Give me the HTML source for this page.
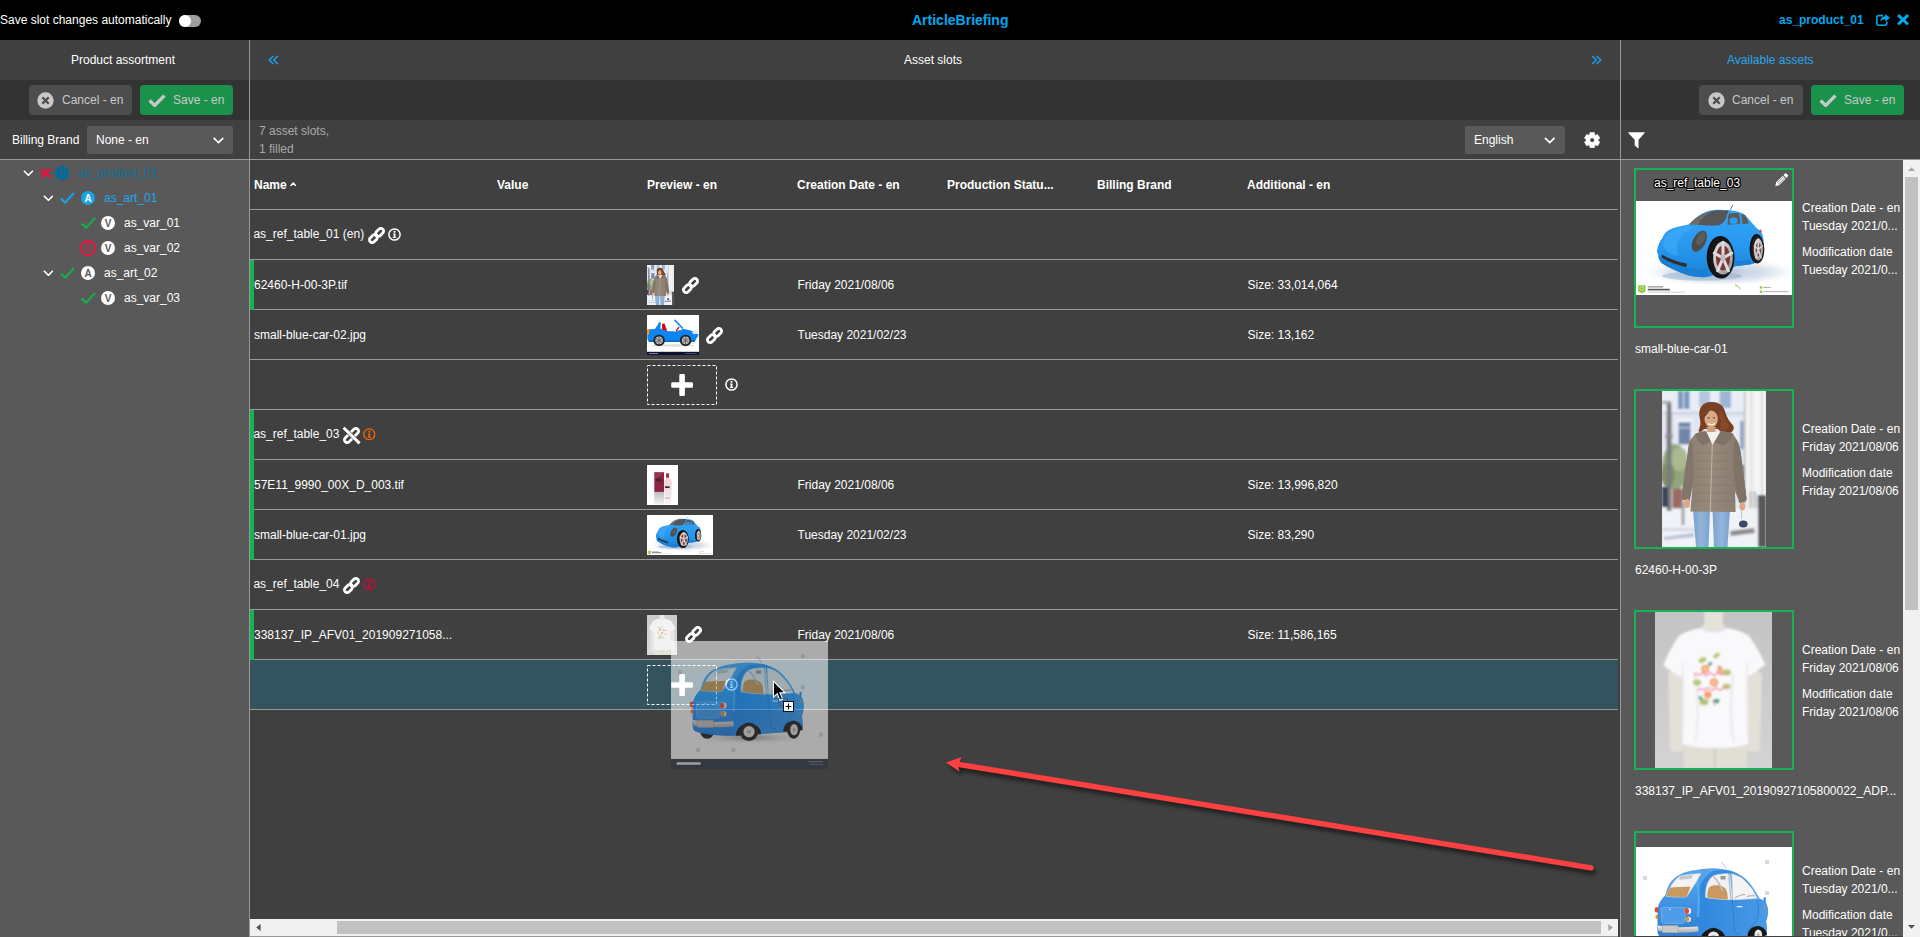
<!DOCTYPE html>
<html>
<head>
<meta charset="utf-8">
<title>ArticleBriefing</title>
<style>
*{box-sizing:border-box;margin:0;padding:0}
html,body{width:1920px;height:937px;overflow:hidden;background:#404040}
body{font-family:"Liberation Sans",sans-serif;font-size:12px;color:#fff;position:relative;line-height:14px}
.a{position:absolute}
.t{position:absolute;white-space:nowrap;line-height:14px;height:14px}
.b{font-weight:bold}
.hl{position:absolute;height:1px;background:#999}
.vl{position:absolute;width:1px;background:#999}
.btn{position:absolute;height:30px;border-radius:4px;top:85px}
.cancel{background:#4d4d4d}
.save{background:#1a924c}
.btn .t{top:8px;color:#c8c8c8}
.gbar{position:absolute;left:250px;width:4px;height:50px;background:#17b353}
.card{position:absolute;left:1634px;width:160px;height:160px;border:2px solid #17b353}
.meta{position:absolute;left:1802px;white-space:nowrap;line-height:14px;height:14px}
</style>
</head>
<body>

<!-- ===== icon symbols ===== -->
<svg width="0" height="0" style="position:absolute">
<defs>
<symbol id="chev" viewBox="0 0 11 7"><polyline points="0.7,0.8 5.5,5.6 10.3,0.8" fill="none" stroke="currentColor" stroke-width="1.7"/></symbol>
<symbol id="check" viewBox="0 0 15 12"><polyline points="0.8,6.6 5.2,10.6 14,1" fill="none" stroke="currentColor" stroke-width="2.1"/></symbol>
<symbol id="xx" viewBox="0 0 11 10"><path d="M1,0.8 L10,9.2 M10,0.8 L1,9.2" fill="none" stroke="currentColor" stroke-width="2.7"/></symbol>
<symbol id="link" viewBox="0 0 17 17"><g transform="rotate(-45 8.5 8.5)" fill="none" stroke="currentColor" stroke-width="2.8"><rect x="-0.4" y="5.75" width="8.9" height="5.5" rx="2.75"/><rect x="8.5" y="5.75" width="8.9" height="5.5" rx="2.75"/><circle cx="8.5" cy="8.5" r="1.2" fill="currentColor" stroke-width="1.2"/></g></symbol>
<symbol id="info" viewBox="0 0 13 13"><circle cx="6.5" cy="6.5" r="5.6" fill="none" stroke="currentColor" stroke-width="1.5"/><circle cx="6.5" cy="3.85" r="1.05" fill="currentColor"/><path d="M5.1,5.5h2.35v3.5h0.75v1h-3.4v-1h0.85v-2.5h-0.55z" fill="currentColor"/></symbol>
<symbol id="info2" viewBox="0 0 13 13"><circle cx="6.5" cy="6.5" r="5.65" fill="none" stroke="currentColor" stroke-width="1.3"/><circle cx="6.5" cy="3.85" r="1" fill="currentColor"/><path d="M5.2,5.55h2.2v3.45h0.7v0.95h-3.2v-0.95h0.8v-2.5h-0.5z" fill="currentColor"/></symbol>
<symbol id="bcheck" viewBox="0 0 18 13"><polyline points="1.6,6.6 6.7,11.4 16.4,1.6" fill="none" stroke="currentColor" stroke-width="3.4"/></symbol>
<symbol id="xcirc" viewBox="0 0 17 17"><circle cx="8.5" cy="8.5" r="8.2" fill="currentColor"/><path d="M5.3,5.3 L11.7,11.7 M11.7,5.3 L5.3,11.7" stroke="#4d4d4d" stroke-width="2.3" fill="none"/></symbol>
<symbol id="cog" viewBox="0 0 16.3 16.3"><path fill="currentColor" stroke="currentColor" stroke-width="0.7" stroke-linejoin="round" fill-rule="evenodd" d="M10.64,2.80L10.25,0.59L6.05,0.59L5.66,2.80L4.77,3.32L2.65,2.55L0.55,6.18L2.27,7.64L2.27,8.66L0.55,10.12L2.65,13.75L4.77,12.98L5.66,13.50L6.05,15.71L10.25,15.71L10.64,13.50L11.53,12.98L13.65,13.75L15.75,10.12L14.03,8.66L14.03,7.64L15.75,6.18L13.65,2.55L11.53,3.32Z M8.15,5.8500000000000005a2.3,2.3 0 1 0 0.001,0z"/></symbol>
<symbol id="filter" viewBox="0 0 17 17"><path fill="currentColor" d="M0.5,0.3h16a0.5,0.5 0 0 1 0.4,0.85l-6.3,6.9v8.3a0.4,0.4 0 0 1 -0.7,0.3l-3.1,-2.7a0.6,0.6 0 0 1 -0.2,-0.45v-5.45l-6.5,-6.9a0.5,0.5 0 0 1 0.4,-0.85z"/></symbol>
<symbol id="pencil" viewBox="0 0 14 14"><path fill="currentColor" d="M0.3,13.7l0.9,-3.9 6.9,-6.9 3,3 -6.9,6.9z M8.9,2.1l1.6,-1.6a0.9,0.9 0 0 1 1.3,0l1.7,1.7a0.9,0.9 0 0 1 0,1.3l-1.6,1.6z"/><path d="M2.2,10.6l6.4,-6.4 M3.5,11.9l6.4,-6.4" stroke="#595959" stroke-width="0.7" fill="none"/></symbol>
<symbol id="share" viewBox="0 0 14 12"><path fill="none" stroke="currentColor" stroke-width="1.6" d="M7,1.6h-4.6a1.6,1.6 0 0 0 -1.6,1.6v6.4a1.6,1.6 0 0 0 1.6,1.6h6.8a1.6,1.6 0 0 0 1.6,-1.6v-2.2"/><path fill="currentColor" d="M9.2,0l4.8,3.7 -4.8,3.7v-2.2c-2.6,0 -4,0.9 -4.9,2.9 0,-3.4 1.6,-5.6 4.9,-5.9z"/></symbol>
<symbol id="imgA" viewBox="0 0 156 94" preserveAspectRatio="none">
<defs>
<linearGradient id="aBody" x1="0" y1="0" x2="0" y2="1"><stop offset="0" stop-color="#35a5f6"/><stop offset="0.55" stop-color="#2798ef"/><stop offset="1" stop-color="#1c82d8"/></linearGradient>
<radialGradient id="aShadow" cx="0.5" cy="0.5" r="0.5"><stop offset="0" stop-color="#9fb6d0" stop-opacity="0.85"/><stop offset="0.6" stop-color="#c4d3e4" stop-opacity="0.6"/><stop offset="1" stop-color="#fff" stop-opacity="0"/></radialGradient>
<linearGradient id="aRim" x1="0" y1="0" x2="1" y2="1"><stop offset="0" stop-color="#e8e8e8"/><stop offset="1" stop-color="#8d8d8d"/></linearGradient>
</defs>
<rect width="156" height="94" fill="#fff"/>
<ellipse cx="84" cy="71" rx="82" ry="15" fill="url(#aShadow)"/>
<ellipse cx="66" cy="75" rx="40" ry="4.5" fill="#8aa3c0" opacity="0.45"/>
<!-- body -->
<path d="M20.8,50.4C22,44 24,40 26.1,37.6C28,33 30,30.5 33.1,29C38,26.5 44,25 49.1,24.2L53.4,23.2C57,19 62,14.5 67.2,12C72,9.8 77,8.9 81.1,8.8C86,8.6 90,8.8 93.9,9.3C98,9.8 101.5,10.4 104.6,11.4C108.5,13 111,15.5 113.1,18.4C116,22 118.5,24.5 120.6,26.9C123,28.5 124.8,30 125.9,32.2C127.3,35 127.8,40 127.6,46L118,62.8L99.3,65.3L92,70L71.500,76C64,76.500 57,75.500 51.200,73.900C41,70.500 32,66.500 25.600,62.100C23.500,60 22.600,57.500 22.400,54.600Z" fill="url(#aBody)"/>
<ellipse cx="84.3" cy="56" rx="13.6" ry="21" fill="#0d0d0d"/>
<!-- lower body darker -->
<path d="M22.4,54.600C32,60 42,64 51.200,66.500C58,68 64,68.500 70.800,68.200L71.500,76C64,76.500 57,75.500 51.200,73.900C41,70.500 32,66.500 25.600,62.100C23.500,60 22.600,57.500 22.400,54.600Z" fill="#1b7fd3"/>
<path d="M99.300,65.300L115.300,63.200L114.600,58.500L99.200,60.500Z" fill="#1b7fd3"/>
<!-- rear wheel -->
<ellipse cx="120.6" cy="47.6" rx="7" ry="14.6" fill="#0d0d0d"/>
<ellipse cx="121.7" cy="48.4" rx="6.6" ry="14" fill="#1c1c1c"/>
<ellipse cx="122.3" cy="48.4" rx="4.6" ry="11" fill="url(#aRim)"/>
<ellipse cx="122.3" cy="48.4" rx="2.6" ry="7" fill="#7a3b3b"/>
<path d="M122.3,48.4L122.3,38.0M122.3,48.4L118.3,45.2M122.3,48.4L119.8,56.8M122.3,48.4L124.8,56.8M122.3,48.4L126.3,45.2" stroke="#d6d6d6" stroke-width="1.6" stroke-linecap="round"/>
<!-- hood highlight -->
<path d="M28,38C32,31.500 40,27.500 50,25.500C54,25 57,25.500 58,27C52,29 46,33 43,38C40,44 40,50 43,55C38,55 32,52 29,48C27,45 27,41 28,38Z" fill="#43adf8" opacity="0.55"/>
<!-- windshield -->
<path d="M53.400,23.200C57.500,19 62.500,15 67.200,13C72,10.800 78,9.500 83.200,9.300L92.800,9.600C91.500,12.500 90.500,15.500 89.600,18.400C87.500,21 85.500,23 83.200,24.200C76,24.800 68,24.500 61.900,23.700Z" fill="#565656"/>
<path d="M53.400,23.200C57.500,19 62.500,15 67.200,13C70,11.800 73,10.800 76,10.200C70,14 65,18.500 61.900,23.700Z" fill="#6c6c6c"/>
<!-- side windows -->
<path d="M92.800,12.500C96,12 99.500,11.800 103,12L104.600,22.600C100.500,23.300 96,23.600 91.800,23.700C91.500,19.500 92,15.500 92.800,12.500Z" fill="#5a5a5a"/>
<path d="M105.100,13C106.500,13.200 107.800,13.600 108.900,14.100C110.500,16.500 111.800,19.500 112.600,22.600L106.700,23.200Z" fill="#5a5a5a"/>
<ellipse cx="97.600" cy="19.800" rx="4.200" ry="3.300" fill="#2b9cf2"/>
<!-- antenna -->
<path d="M94.400,8.800L96.800,3.800" stroke="#444" stroke-width="0.7"/>
<!-- headlight -->
<ellipse cx="63.300" cy="40.200" rx="6.300" ry="11.400" transform="rotate(29 63.3 40.2)" fill="#4b4b4b"/>
<ellipse cx="64.800" cy="37.500" rx="3.800" ry="7" transform="rotate(29 64.8 37.5)" fill="#5c5c5c"/>
<!-- grille -->
<path d="M25.800,53.400C33,57.500 42,61 50.500,62.600C51,64 50.800,65.200 50,66C41.500,64.300 32.500,60.800 26,56.800C25.500,55.600 25.400,54.500 25.800,53.400Z" fill="#2e2e2e"/>
<!-- tail light -->
<ellipse cx="124.500" cy="30.300" rx="1" ry="1.800" fill="#d33"/>
<!-- front wheel -->
<ellipse cx="85.500" cy="57" rx="13" ry="20.600" fill="#161616"/>
<ellipse cx="87" cy="57" rx="9.800" ry="16.600" fill="url(#aRim)"/>
<ellipse cx="87" cy="57" rx="7" ry="12.500" fill="#7d3636"/>
<path d="M87,57L87.0,41.2M87,57L78.3,52.1M87,57L81.6,69.8M87,57L92.4,69.8M87,57L95.7,52.1" stroke="#dcdcdc" stroke-width="3" stroke-linecap="round"/>
<ellipse cx="87" cy="57" rx="2.400" ry="3.800" fill="#bdbdbd"/>
<!-- footer -->
<rect x="0" y="83.600" width="156" height="10.400" fill="#fff"/>
<path d="M2.200,84.300h7.300v6.200l-3.650,1.700l-3.650,-1.700z" fill="#8cc63f"/>
<circle cx="5.850" cy="87.400" r="2" fill="none" stroke="#d7efb2" stroke-width="0.700"/>
<rect x="11.800" y="85.200" width="15.500" height="1.300" fill="#9a9a9a"/>
<rect x="11.800" y="87.800" width="22" height="1.600" fill="#555"/>
<rect x="11.800" y="90.700" width="37" height="0.800" fill="#c4c4c4"/>
<path d="M99,83.600l3.500,2l1.500,2.600" stroke="#8cc63f" stroke-width="1" fill="none"/>
<rect x="123.800" y="85.300" width="2.300" height="2.300" fill="#8cc63f"/>
<rect x="123.800" y="89.500" width="2.300" height="2.300" fill="#8cc63f"/>
<rect x="127.200" y="86" width="7.500" height="0.900" fill="#aaa"/>
<rect x="127.200" y="90.200" width="25.500" height="0.900" fill="#aaa"/>
</symbol>
<symbol id="imgB" viewBox="0 0 104 156" preserveAspectRatio="none">
<defs>
<linearGradient id="bCoat" x1="0" y1="0" x2="1" y2="0"><stop offset="0" stop-color="#8a7d70"/><stop offset="0.45" stop-color="#978a7c"/><stop offset="1" stop-color="#85786b"/></linearGradient>
<linearGradient id="bJeans" x1="0" y1="0" x2="1" y2="0"><stop offset="0" stop-color="#7ba2cd"/><stop offset="0.5" stop-color="#93b5db"/><stop offset="1" stop-color="#7ba2cd"/></linearGradient>
<filter id="bBlur" x="-10%" y="-10%" width="120%" height="120%"><feGaussianBlur stdDeviation="1.1"/></filter>
</defs>
<rect width="104" height="156" fill="#dfe5f1"/>
<g filter="url(#bBlur)">
<rect x="0" y="0" width="104" height="22" fill="#e9edf6"/>
<rect x="16" y="0" width="11.500" height="18" fill="#7d96bc"/>
<rect x="21" y="0" width="1" height="18" fill="#dfe5f1"/>
<rect x="37" y="0" width="11" height="17" fill="#b7c6e0"/>
<rect x="57.600" y="0" width="11.400" height="17" fill="#9fb3d4"/>
<rect x="0" y="21" width="82" height="2" fill="#c9d1e2"/>
<rect x="14" y="27" width="17" height="30" fill="#eef1f8"/>
<rect x="16.500" y="31.400" width="12" height="22" fill="#6f86a8"/>
<rect x="16.500" y="36" width="12" height="1.200" fill="#c9d1e2"/>
<rect x="64" y="26" width="16" height="30" fill="#e9edf6"/>
<rect x="78" y="30" width="3.500" height="28" fill="#8fa2c2"/>
<rect x="79" y="74" width="5" height="20" fill="#6d7c95"/>
<!-- right column -->
<rect x="82.400" y="0" width="21.600" height="156" fill="#f4f4f4"/>
<rect x="88" y="0" width="2.500" height="110" fill="#e2e2e2"/>
<rect x="99" y="0" width="2" height="110" fill="#dcdcdc"/>
<rect x="82" y="0" width="1.600" height="120" fill="#b9bcc4"/>
<rect x="95.700" y="104" width="8.300" height="52" fill="#595959"/>
<rect x="87" y="100" width="3" height="32" fill="#c7c7c7"/>
<rect x="91.500" y="100" width="2.500" height="32" fill="#bdbdbd"/>
<!-- ground -->
<rect x="0" y="117" width="96" height="39" fill="#f0f2f7"/>
<rect x="0" y="137" width="40" height="3" fill="#d5dae6"/>
<path d="M2,146l30,-4v4l-30,3z" fill="#b8c1d4"/>
<!-- bush -->
<ellipse cx="13" cy="76" rx="13" ry="23" fill="#93a57c"/>
<ellipse cx="17" cy="68" rx="8" ry="12" fill="#a9b990"/>
<ellipse cx="6" cy="84" rx="7" ry="12" fill="#7d9068"/>
<!-- lamp post -->
<rect x="4.800" y="12" width="4.600" height="108" fill="#7b7b7b"/>
<rect x="3.500" y="44" width="7" height="3" fill="#8a8a8a"/>
<rect x="0" y="10" width="9" height="2.500" fill="#a0a0a0"/>
<!-- dark car + planter -->
<rect x="0" y="96" width="6" height="20" fill="#3b4759"/>
<rect x="10.600" y="97.800" width="10" height="19.500" fill="#9b6b60"/>
<rect x="19.500" y="112" width="3" height="22" fill="#a3a3a3"/>
<!-- bag shadow -->
<path d="M68,140l24,-3l1,5l-24,3z" fill="#8d8d8d"/>
</g>
<!-- legs -->
<path d="M31,119h17l-1.500,37h-12.500z" fill="url(#bJeans)"/>
<path d="M50.500,119h17.500l-2.500,37h-13.500z" fill="url(#bJeans)"/>
<!-- bag -->
<path d="M79.500,118v10" stroke="#c8ccd6" stroke-width="1.200"/>
<ellipse cx="81.300" cy="133" rx="4.300" ry="3.600" fill="#3c4763"/>
<!-- hair back -->
<path d="M37.500,26C36,17 41,11 49,11C57,10.500 62,15 63.500,22C65,27 68,31 71.500,35C72.500,39 70,42 66,42.500C62,43 58,41 56,38L42,38C39.500,41 37,42 36.500,39.500C38.500,36 39,31 37.500,26Z" fill="#7a4024"/>
<!-- coat -->
<path d="M32.800,43.500C36,41 40,40.500 44,40.500L58.500,40.500C63,40.500 67.500,41 70.900,42.500L74.400,48.500C77,52 78.200,58 79,64L84.500,107C84.700,109.500 83.500,111 81,111.500L77.500,112L73,100L73.600,121L28.400,120.500L30.500,96L27.500,110L22,109C20,108.500 19.300,107 19.500,105L26,60C26.500,55 27,52 27.500,50Z" fill="url(#bCoat)"/>
<!-- sleeves shading -->
<path d="M27.500,50L26,60L19.500,105C19.300,107 20,108.500 22,109L27.500,110L31.500,88C32,74 31.500,62 30,52Z" fill="#82756a"/>
<path d="M74.400,48.500C77,52 78.200,58 79,64L84.500,107C84.700,109.500 83.500,111 81,111.500L77.500,112L72.500,88C71,74 71.500,60 72.500,50Z" fill="#7f7267"/>
<!-- collar -->
<path d="M32.800,43.500C36,41 40,40.500 44.300,40.200L49,51L41,54C37,52 34,48 32.800,43.500Z" fill="#7f7266"/>
<path d="M70.900,42.500C67,41 63,40.500 58.500,40.200L52,51L61,54.500C66,52 69.500,48 70.900,42.500Z" fill="#7f7266"/>
<!-- white top -->
<path d="M44.300,40.200L58.500,40.200L50.500,54Z" fill="#f3f1ec"/>
<!-- quilting -->
<path d="M32,62H72M31,70H73M30.500,78H73.500M30.500,86H73.500M30,94H74M29.500,102H74M29,110H74" stroke="#7d7165" stroke-width="0.600" opacity="0.700"/>
<path d="M50.300,54L48.300,120" stroke="#cbbd9f" stroke-width="0.900"/>
<!-- face -->
<ellipse cx="49.200" cy="28" rx="6.700" ry="8.600" fill="#dba987"/>
<path d="M44.500,36L54,36L53,41L45.500,41Z" fill="#cf9d7c"/>
<path d="M46,32.500C48,34.200 51,34.200 52.800,32.500" stroke="#fff" stroke-width="1.100" fill="none"/>
<ellipse cx="46.600" cy="26.800" rx="1.100" ry="0.600" fill="#4a2c1c"/><ellipse cx="52" cy="26.800" rx="1.100" ry="0.600" fill="#4a2c1c"/>
<path d="M41.500,27C41,19 45,14.500 50,14.500C55,14.500 58,18 58,23C55,22 51,19.500 49,17.500C47,21 44,25 41.500,27Z" fill="#7a4024"/>
<path d="M56,22C59,26 60,33 58,39C62,40 66,38 67.500,35C64,31 61,26 59.500,21Z" fill="#86492a"/>
<!-- hands -->
<ellipse cx="25" cy="112.500" rx="3" ry="4.500" fill="#dba987"/>
<ellipse cx="80.300" cy="115.500" rx="2.800" ry="4.300" fill="#dba987"/>
</symbol>

<symbol id="imgC" viewBox="0 0 117 156" preserveAspectRatio="none">
<defs>
<linearGradient id="cBg" x1="0" y1="0" x2="0" y2="1"><stop offset="0" stop-color="#c4c4c6"/><stop offset="1" stop-color="#d3d3d3"/></linearGradient>
<filter id="cBlur" x="-10%" y="-10%" width="120%" height="120%"><feGaussianBlur stdDeviation="0.9"/></filter>
<filter id="cBlur2" x="-20%" y="-20%" width="140%" height="140%"><feGaussianBlur stdDeviation="1.6"/></filter>
</defs>
<rect width="117" height="156" fill="url(#cBg)"/>
<g filter="url(#cBlur)">
<!-- mannequin -->
<path d="M49.300,0H67.900V10C67.900,14 72,17 79,19.500V24H38V19.500C45,17 49.300,14 49.300,10Z" fill="#e4e2d9"/>
<path d="M13,62C13,58 26,58 27,62L28,137C28,141 16,141 15,137Z" fill="#e2e0d7"/>
<path d="M92,62C92,58 106,58 107,62L105,137C104,141 93,141 92.500,137Z" fill="#e2e0d7"/>
<path d="M28,130H93L92,156H29Z" fill="#e0ded5"/>
<rect x="59" y="136" width="2" height="20" fill="#cfcdc4"/>
<!-- shirt -->
<path d="M24.500,23.500C31,19.500 39,17 46,16C52,21 66,21 71.500,16C79,17 87,19.500 93.600,23.500C100,32 106,43 110.400,52.600C104,58 98,62 91.800,65L92.500,50L93.600,131.500C80,137.500 40,137.500 27.100,131.500L27.500,50L27.100,65C20,62 14,58 8.500,53.500C12,43 18,32 24.500,23.500Z" fill="#f9f9fb"/>
<path d="M46,16C52,21 66,21 71.500,16" stroke="#e3e3ea" stroke-width="1.500" fill="none"/>
<path d="M27.500,50C29,75 29,105 27.100,131.500M92.500,50C91,75 91,105 93.600,131.500" stroke="#e6e6ec" stroke-width="1.200" fill="none"/>
<path d="M40,60C44,90 44,110 40,130M78,62C75,90 75,112 79,130" stroke="#ececf1" stroke-width="2.500" fill="none"/>
</g>
<!-- print -->
<g filter="url(#cBlur)">
<ellipse cx="47.500" cy="48" rx="4" ry="2.600" fill="#b8c77d" transform="rotate(-25 47.5 48)"/>
<ellipse cx="61.500" cy="43.500" rx="3.600" ry="2.200" fill="#bccb84" transform="rotate(-35 61.5 43.5)"/>
<ellipse cx="72" cy="60.500" rx="4" ry="3" fill="#b5c47a"/>
<ellipse cx="42" cy="70.500" rx="4" ry="3" fill="#b8c77d"/>
<ellipse cx="71.500" cy="74.500" rx="4" ry="2.800" fill="#b8c77d"/>
<ellipse cx="49" cy="90" rx="4.500" ry="3.200" fill="#b5c47a"/>
<ellipse cx="61.500" cy="89" rx="3" ry="2.200" fill="#5f9c8a"/>
<ellipse cx="55" cy="52" rx="2.500" ry="1.500" fill="#5f9c8a" transform="rotate(-40 55 52)"/>
<ellipse cx="65" cy="56" rx="2.500" ry="1.500" fill="#5f9c8a" transform="rotate(30 65 56)"/>
<ellipse cx="45.500" cy="86" rx="2.500" ry="1.500" fill="#5f9c8a" transform="rotate(40 45.5 86)"/>
<circle cx="50.200" cy="57.100" r="4" fill="#f5a078"/>
<circle cx="65.200" cy="58.800" r="3.400" fill="#f7b08c"/>
<circle cx="59" cy="70.400" r="4.200" fill="#f59b7a"/>
<circle cx="52.800" cy="82.800" r="3.800" fill="#f5a078"/>
<circle cx="50.200" cy="57.100" r="1.800" fill="#f8d9a0"/>
<circle cx="59" cy="70.400" r="1.800" fill="#f8d9a0"/>
<path d="M39,64C42,58 44,66 46,62C48,58 50,66 53,62C56,58 58,66 61,62C64,58 66,66 70,61" stroke="#f08aa0" stroke-width="1.300" fill="none"/>
<path d="M43,79C46,73 48,81 51,77C54,73 56,81 59,77C62,73 64,81 67,77C69,74 71,77 72,75" stroke="#f08aa0" stroke-width="1.300" fill="none"/>
<path d="M57,88L60.500,94" stroke="#f08aa0" stroke-width="1"/>
</g>
</symbol>
<symbol id="imgD" viewBox="0 0 156 127" preserveAspectRatio="none">
<defs>
<linearGradient id="dBody" x1="0" y1="0" x2="0" y2="1"><stop offset="0" stop-color="#5aa6ec"/><stop offset="0.5" stop-color="#3f92e2"/><stop offset="1" stop-color="#2f7ccc"/></linearGradient>
<linearGradient id="dSide" x1="0" y1="0" x2="1" y2="0"><stop offset="0" stop-color="#2f86dc"/><stop offset="0.5" stop-color="#3b90e2"/><stop offset="1" stop-color="#4a9be8"/></linearGradient>
<linearGradient id="dBump" x1="0" y1="0" x2="0" y2="1"><stop offset="0" stop-color="#f2f2f2"/><stop offset="1" stop-color="#a9a9a9"/></linearGradient>
<radialGradient id="dSh" cx="0.5" cy="0.5" r="0.5"><stop offset="0" stop-color="#8a8a8a" stop-opacity="0.8"/><stop offset="1" stop-color="#fff" stop-opacity="0"/></radialGradient>
</defs>
<rect width="156" height="127" fill="#fff"/>
<!-- watermark squares -->
<g fill="#d9d9d9"><rect x="7" y="29" width="4" height="4"/><rect x="129" y="13" width="4" height="4"/><rect x="129" y="44" width="4" height="4"/><rect x="147" y="91" width="4" height="4"/><rect x="25" y="106" width="4" height="4"/><rect x="60" y="106" width="4" height="4"/></g>
<ellipse cx="78" cy="96" rx="62" ry="7" fill="url(#dSh)"/>
<!-- far rear wheel -->
<ellipse cx="36" cy="89.500" rx="7" ry="7.500" fill="#1c1c1c"/>
<!-- body -->
<path d="M21.500,62C22.500,56 25.500,52 29.400,48C31,42 32.500,38.500 34.100,36.100C37,32 40,29.500 43.600,27.800C49,25 55,23.700 60.200,23.100C66,22 71,21.400 76.800,21.300C83,21.300 89,22.200 94.500,23.700C99.500,25.300 104,27.500 107.600,30.200C111.500,33.500 114.500,37 117,40.900C119.500,44.500 121.500,48 123,51.500C126,52.500 128.500,54 130.100,56.300C131.500,59 132.100,62 131.900,64.600C132,68 131.300,71 130.100,74L131,84C131.200,87 130,89 127,89.500L62,94C50,94.500 35,93 25,90C22.500,89 21.500,87 21.500,84Z" fill="url(#dBody)"/>
<!-- side panel slightly different tone -->
<path d="M62,52C62,42 66,30 77,24C83,23 89,22.500 94.500,23.700C104,27 112,34 117,40.900C119.500,44.500 121.500,48 123,51.500C126,52.500 128.500,54 130.100,56.300C132,60 132.300,66 130.100,74L131,84C131.200,87 130,89 127,89.500L62,94C60,80 61,66 62,52Z" fill="url(#dSide)"/>
<path d="M60,30C64,42 63,58 62,70" stroke="#62b0f4" stroke-width="2.200" fill="none" opacity="0.800"/>
<!-- rear window -->
<path d="M30,49.200C32.500,43 35,38.500 37.700,35C40,32 42.300,30.300 44.800,29C51,27.500 58,26.800 64.900,26.700C63,29.500 61.500,32.500 60.200,35C57,40 53.500,45 50.700,49.800C44,50.300 37,50 30,49.200Z" fill="#f4f4f4" stroke="#cfd8e2" stroke-width="0.800"/>
<path d="M34,40.500C41,39.800 48,39.600 54.500,39.700L50.700,49.800C44,50.300 37,50 30,49.200C31,46 32.500,43 34,40.500Z" fill="#c9995f"/>
<path d="M44.800,29L57,28L55.500,31.500L43,33Z" fill="#c7c7c7"/>
<!-- rear side window -->
<path d="M69.700,50.400C69.500,46 70,42 70.800,38.500C72,34.500 74,31.500 76.800,29C81.500,27.300 87,26.600 92.200,26.700L94.500,52.700C86,52.500 78,51.800 69.700,50.400Z" fill="#f1f1f1" stroke="#cfd8e2" stroke-width="0.800"/>
<path d="M71.200,50.200C71.200,46 72,42.500 73,40.500C75,38.500 78,38 82,38.200C86,38.500 89,40 90.500,43.500C91.500,46 91.800,49.500 91.800,52.500C85,52.300 78,51.500 71.200,50.200Z" fill="#c9995f"/>
<path d="M76.800,29C81,33 84.500,38 86.500,44" stroke="#bdbdbd" stroke-width="1.600" fill="none"/>
<rect x="84.500" y="29" width="5" height="3.500" fill="#9a9a9a"/>
<!-- front side window -->
<path d="M95.700,26.700C99.500,27.800 103.500,29.500 106.400,31.400C110.500,35 114,39 117,43.200C118.600,46 120,49 121.200,51.500L96.900,52.700Z" fill="#f4f4f4" stroke="#cfd8e2" stroke-width="0.800"/>
<path d="M99,51C103,48.500 106,47.500 109,47.600M111,49.500C114,48.500 117,48.600 119,49" stroke="#8f8f8f" stroke-width="0.800" fill="none"/>
<path d="M93.500,26.700L95.800,52.700" stroke="#d8d8d8" stroke-width="1.600"/>
<!-- door lines -->
<path d="M96,53C97,62 98,74 98.500,82C99,86 101,87.500 104,87" stroke="#2b74c2" stroke-width="0.700" fill="none"/>
<path d="M121.500,53C123,60 123,68 120,74C117,79 113,82 111,86" stroke="#2b74c2" stroke-width="0.700" fill="none"/>
<rect x="100.500" y="59" width="6" height="1.200" rx="0.600" fill="#dfe9f5"/>
<!-- trunk panel -->
<path d="M27,60.400H47.500C49,60.400 49.700,61.200 49.600,62.500L48.600,74.500C48.500,75.800 47.600,76.400 46.300,76.400H29C27.200,76.400 25.800,75.500 25.600,74L25.200,62.500C25.200,61.200 25.800,60.400 27,60.400Z" fill="#4f9de8" stroke="#79b8f3" stroke-width="0.700"/>
<circle cx="34" cy="62.300" r="0.800" fill="#e8f2fc"/>
<!-- tail lights -->
<ellipse cx="20.600" cy="62.800" rx="1.900" ry="2.800" fill="#d94a34"/>
<ellipse cx="20.900" cy="69.900" rx="1.500" ry="2.100" fill="#e08a2e"/>
<ellipse cx="51.800" cy="64" rx="3.400" ry="3.300" fill="#eef0f2"/>
<ellipse cx="50.700" cy="64" rx="2.300" ry="2.900" fill="#df4a30"/>
<ellipse cx="52.300" cy="72.300" rx="2.700" ry="2.600" fill="#eef0f2"/>
<ellipse cx="51.500" cy="72.300" rx="1.800" ry="2.300" fill="#e38a2b"/>
<!-- bumper -->
<path d="M21.700,78.500C33,80.500 48,80.800 62,79.500L62.500,84.500C48,86.300 33,86 22.500,84Z" fill="url(#dBump)"/>
<rect x="26.500" y="78.500" width="15.500" height="7.200" fill="#c9c9c9" stroke="#9b9b9b" stroke-width="0.500"/>
<!-- mirror / indicator / antenna -->
<path d="M127.500,51.500C128.500,49.500 129.500,49.500 129.800,51.500L129.500,56L128,56Z" fill="#2f86dc"/>
<ellipse cx="128.600" cy="60.400" rx="1.300" ry="1" fill="#e08a2e"/>
<path d="M89.800,21.300C88.500,18.500 87,16.500 85.100,15.400" stroke="#5aa6ec" stroke-width="0.600" fill="none"/>
<!-- wheel arches + wheels -->
<path d="M64.500,94C64.500,78 89.500,78 89.500,92.500Z" fill="#141414"/>
<circle cx="77.500" cy="90" r="9.200" fill="#1a1a1a"/>
<circle cx="77.500" cy="90" r="5.600" fill="#e9e9e9"/>
<circle cx="77.500" cy="90" r="2" fill="#b5b5b5"/>
<path d="M111.500,90C111.500,76 130.500,76 130.800,88.500Z" fill="#141414"/>
<ellipse cx="121.800" cy="88" rx="6.500" ry="9" fill="#1a1a1a"/>
<ellipse cx="122.300" cy="88" rx="3.800" ry="5.600" fill="#e9e9e9"/>
<ellipse cx="122.300" cy="88" rx="1.400" ry="2" fill="#b5b5b5"/>
<!-- footer -->
<rect x="0" y="117" width="156" height="10" fill="#2d333f"/>
<rect x="5.500" y="120.300" width="24" height="2.600" rx="0.800" fill="#e9e9ec"/>
<rect x="136" y="119.500" width="15" height="0.800" fill="#9097a3"/>
<rect x="138" y="122" width="13" height="0.800" fill="#6f7684"/>
</symbol>

<symbol id="imgE" viewBox="0 0 52 40" preserveAspectRatio="none">
<defs><filter id="eBlur" x="-5%" y="-5%" width="110%" height="110%"><feGaussianBlur stdDeviation="0.35"/></filter></defs>
<rect width="52" height="40" fill="#fff"/>
<g filter="url(#eBlur)">
<ellipse cx="26" cy="30.500" rx="22" ry="1.200" fill="#ddd"/>
<path d="M28,5.400L35.500,13.100" stroke="#1a8cf2" stroke-width="1.600" stroke-linecap="round"/>
<path d="M15,8.700L17.500,8.500L20.100,15.900L15.200,15.400Z" fill="#e00000"/>
<path d="M31.400,11.800L32.600,12.300L29.800,16.400L28.500,16.100Z" fill="#e00000"/>
<path d="M0.400,15.100C1,14.600 1.800,14.400 2.700,14.300L7.800,14.100C9.500,12 11,9.500 11.900,7.200L13.900,7.200C13.700,9.500 13.500,11.500 13.400,13.600C15.500,14.800 17.800,15.600 20,16.100L28.800,16.400C31.500,15.800 34,15 36,14.100C39,14.300 42,15 44.700,15.900C47.500,16.800 50,18.200 51.600,19.700C51,21.200 50.200,22.600 49.300,23.800C48.700,25 48,26 47.200,26.900L2.200,26.900C1.500,26 0.800,25 0.400,23.800Z" fill="#0a84f0"/>
<path d="M2.200,26.900L47.200,26.900L48.300,25.200L1.200,25.200Z" fill="#0670d0"/>
<ellipse cx="1.100" cy="16.900" rx="1.300" ry="2.800" fill="#f7931e"/>
<ellipse cx="48" cy="17.400" rx="2.800" ry="1.800" fill="#e4e4e4"/>
<circle cx="12.100" cy="25.400" r="5.700" fill="#222"/>
<circle cx="12.100" cy="25.400" r="3.800" fill="#b9b9b9"/>
<path d="M12.100,21.800v7.200M9,23.500l6.200,3.800M15.200,23.500l-6.200,3.800" stroke="#555" stroke-width="0.800"/>
<circle cx="38.600" cy="25.400" r="5.700" fill="#222"/>
<circle cx="38.600" cy="25.400" r="3.800" fill="#b9b9b9"/>
<path d="M38.600,21.800v7.200M35.500,23.500l6.200,3.800M41.700,23.500l-6.200,3.800" stroke="#555" stroke-width="0.800"/>
</g>
<rect x="0" y="36.800" width="52" height="3.200" fill="#0e1230"/>
<rect x="2" y="38" width="9" height="0.800" fill="#9ba0b5"/>
<rect x="38" y="38.100" width="12" height="0.600" fill="#6f7590"/>
</symbol>

<symbol id="imgF" viewBox="0 0 31 40" preserveAspectRatio="none">
<defs>
<filter id="fBlur" x="-10%" y="-10%" width="120%" height="120%"><feGaussianBlur stdDeviation="0.45"/></filter>
<linearGradient id="fRef" x1="0" y1="0" x2="0" y2="1"><stop offset="0" stop-color="#bdbdbd"/><stop offset="1" stop-color="#f3f3f3"/></linearGradient>
<linearGradient id="fRef2" x1="0" y1="0" x2="0" y2="1"><stop offset="0" stop-color="#f1dfe3"/><stop offset="1" stop-color="#fbf6f7"/></linearGradient>
</defs>
<rect width="31" height="40" fill="#fff"/>
<g filter="url(#fBlur)">
<rect x="7.300" y="27" width="9.700" height="12.500" fill="url(#fRef)"/>
<rect x="17.500" y="26" width="7" height="13" fill="url(#fRef2)"/>
<rect x="18" y="32.300" width="4.600" height="1.700" fill="#c9c9cc"/>
<rect x="7.300" y="7.200" width="9.700" height="19.700" fill="#8e2344"/>
<path d="M8,10L15,8.500M8,12.500L14,9.500" stroke="#b45c78" stroke-width="0.600"/>
<rect x="9.100" y="13.600" width="5.300" height="2.800" fill="#3a2a22"/>
<path d="M17.300,17C17.300,14.500 18.500,13.300 19.500,12.800H22C23.500,13.300 24.700,14.500 24.700,17V25.400H17.300Z" fill="#f3d7de"/>
<rect x="19" y="8.200" width="3.100" height="4.600" rx="0.500" fill="#a63058"/>
<rect x="18" y="21.300" width="4.600" height="1.700" fill="#3a2a28"/>
</g>
</symbol>
</defs>
</svg>
<!-- ===== background bands ===== -->
<div class="a" style="left:0;top:0;width:1920px;height:40px;background:#000"></div>
<div class="a" style="left:0;top:40px;width:1920px;height:40px;background:#404040"></div>
<div class="a" style="left:0;top:80px;width:1920px;height:40px;background:#333"></div>
<div class="a" style="left:0;top:120px;width:1920px;height:40px;background:#404040"></div>
<div class="a" style="left:0;top:160px;width:249px;height:777px;background:#595959"></div>
<div class="a" style="left:250px;top:160px;width:1370px;height:777px;background:#404040"></div>
<div class="a" style="left:1621px;top:160px;width:299px;height:777px;background:#595959"></div>
<!-- dividers -->
<div class="vl" style="left:249px;top:40px;height:897px"></div>
<div class="vl" style="left:1620px;top:40px;height:897px"></div>
<div class="hl" style="left:0;top:159px;width:1920px"></div>

<!-- ===== top bar ===== -->
<div id="topbar">
<div class="t" style="left:0px;top:13px">Save slot changes automatically</div>
<div class="a" style="left:179px;top:15px;width:22px;height:12px;border-radius:6px;background:#9e9e9e"></div>
<div class="a" style="left:179px;top:15px;width:12px;height:12px;border-radius:6px;background:#fff"></div>
<div class="t b" style="left:912px;top:12px;font-size:14px;line-height:16px;height:16px;color:#00a9ee">ArticleBriefing</div>
<div class="t b" style="left:1779px;top:13px;color:#00a9ee">as_product_01</div>
<svg class="a" style="left:1876px;top:14px;color:#00a9ee" width="14" height="12"><use href="#share"/></svg>
<svg class="a" style="left:1896.5px;top:14px;color:#00a9ee" width="12.2" height="11.4"><use href="#xx"/></svg>
</div>

<!-- ===== header band ===== -->
<div id="hdr">
<div class="t" style="left:71px;top:53px">Product assortment</div>
<div class="t" style="left:904px;top:53px">Asset slots</div>
<div class="t" style="left:1727px;top:53px;color:#2aa4e8">Available assets</div>
</div>

<!-- ===== button band ===== -->
<div id="btns">
<div class="btn cancel" style="left:29px;width:103px"><svg class="a" style="left:8px;top:6.5px;color:#c8c8c8" width="17" height="17"><use href="#xcirc"/></svg><div class="t" style="left:33px">Cancel - en</div></div>
<div class="btn save" style="left:140px;width:93px"><svg class="a" style="left:8px;top:8.5px;color:#c8c8c8" width="18" height="13"><use href="#bcheck"/></svg><div class="t" style="left:33px">Save - en</div></div>
<div class="btn cancel" style="left:1699px;width:104px"><svg class="a" style="left:8.5px;top:6.5px;color:#c8c8c8" width="17" height="17"><use href="#xcirc"/></svg><div class="t" style="left:33px">Cancel - en</div></div>
<div class="btn save" style="left:1811px;width:93px"><svg class="a" style="left:8px;top:8.5px;color:#c8c8c8" width="18" height="13"><use href="#bcheck"/></svg><div class="t" style="left:33px">Save - en</div></div>
</div>

<!-- ===== toolbar band ===== -->
<div id="tools">
<div class="t" style="left:12px;top:133px">Billing Brand</div>
<div class="a" style="left:87px;top:126px;width:146px;height:28px;background:#595959;border-radius:2px"></div>
<div class="t" style="left:96px;top:133px">None - en</div>
<div class="t" style="left:259px;top:124px;color:#aaa">7 asset slots,</div>
<div class="t" style="left:259px;top:142px;color:#aaa">1 filled</div>
<div class="a" style="left:1465px;top:126px;width:100px;height:28px;background:#595959;border-radius:2px"></div>
<div class="t" style="left:1474px;top:133px">English</div>
<svg class="a" style="left:213px;top:137px" width="11" height="7"><use href="#chev"/></svg>
<svg class="a" style="left:1544px;top:136.5px" width="11.5" height="7"><use href="#chev"/></svg>
<svg class="a" style="left:1583.8px;top:131.8px" width="16.3" height="16.3"><use href="#cog"/></svg>
<svg class="a" style="left:1628.4px;top:132px" width="17" height="16.5"><use href="#filter"/></svg>
</div>

<!-- ===== tree ===== -->
<div id="tree">
<svg class="a" style="left:22.8px;top:169.8px" width="10.8" height="6.6"><use href="#chev"/></svg>
<svg class="a" style="left:39.8px;top:168px;color:#e6103e" width="11" height="10"><use href="#xx"/></svg>
<div class="a" style="left:55px;top:166px;width:14.4px;height:14.4px;border-radius:50%;background:#036b99"></div>
<div class="t b" style="left:55px;top:166.7px;width:14.4px;text-align:center;font-size:10px;color:#2f617c">P</div>
<div class="t" style="left:78.3px;top:166px;color:#07709f">as_product_01</div>

<svg class="a" style="left:42.6px;top:194.8px" width="10.8" height="6.6"><use href="#chev"/></svg>
<svg class="a" style="left:60.4px;top:192px;color:#1ca0e8" width="15" height="12"><use href="#check"/></svg>
<div class="a" style="left:80.8px;top:190.8px;width:14.4px;height:14.4px;border-radius:50%;background:#1aa3e6"></div>
<div class="t b" style="left:80.8px;top:191.5px;width:14.4px;text-align:center;font-size:10px;color:#fff">A</div>
<div class="t" style="left:104px;top:191px;color:#1ea7ee">as_art_01</div>

<svg class="a" style="left:80.6px;top:217.2px;color:#14b04a" width="15" height="12"><use href="#check"/></svg>
<div class="a" style="left:100.8px;top:215.8px;width:14.4px;height:14.4px;border-radius:50%;background:#fff"></div>
<div class="t b" style="left:100.8px;top:216.5px;width:14.4px;text-align:center;font-size:10px;color:#595959">V</div>
<div class="t" style="left:124px;top:216px">as_var_01</div>

<div class="a" style="left:80.4px;top:240.4px;width:15.2px;height:15.2px;border-radius:50%;border:2px solid #ea1440"></div>
<div class="a" style="left:86.9px;top:243.4px;width:2.2px;height:5.6px;background:#e6103e"></div>
<div class="a" style="left:86.9px;top:250.3px;width:2.2px;height:2.2px;background:#e6103e"></div>
<div class="a" style="left:100.8px;top:240.8px;width:14.4px;height:14.4px;border-radius:50%;background:#fff"></div>
<div class="t b" style="left:100.8px;top:241.5px;width:14.4px;text-align:center;font-size:10px;color:#595959">V</div>
<div class="t" style="left:124px;top:241px">as_var_02</div>

<svg class="a" style="left:42.6px;top:269.8px" width="10.8" height="6.6"><use href="#chev"/></svg>
<svg class="a" style="left:60.4px;top:267px;color:#14b04a" width="15" height="12"><use href="#check"/></svg>
<div class="a" style="left:80.8px;top:265.8px;width:14.4px;height:14.4px;border-radius:50%;background:#fff"></div>
<div class="t b" style="left:80.8px;top:266.5px;width:14.4px;text-align:center;font-size:10px;color:#595959">A</div>
<div class="t" style="left:104px;top:266px">as_art_02</div>

<svg class="a" style="left:80.6px;top:292.2px;color:#14b04a" width="15" height="12"><use href="#check"/></svg>
<div class="a" style="left:100.8px;top:290.8px;width:14.4px;height:14.4px;border-radius:50%;background:#fff"></div>
<div class="t b" style="left:100.8px;top:291.5px;width:14.4px;text-align:center;font-size:10px;color:#595959">V</div>
<div class="t" style="left:124px;top:291px">as_var_03</div>
</div>

<!-- ===== table ===== -->
<div id="table">
<div class="a" style="left:250px;top:660px;width:1368px;height:49px;background:#33535f"></div>
<div class="hl" style="left:250px;top:209px;width:1368px"></div>
<div class="hl" style="left:250px;top:259px;width:1368px"></div>
<div class="hl" style="left:250px;top:309px;width:1368px"></div>
<div class="hl" style="left:250px;top:359px;width:1368px"></div>
<div class="hl" style="left:250px;top:409px;width:1368px"></div>
<div class="hl" style="left:250px;top:459px;width:1368px"></div>
<div class="hl" style="left:250px;top:509px;width:1368px"></div>
<div class="hl" style="left:250px;top:559px;width:1368px"></div>
<div class="hl" style="left:250px;top:609px;width:1368px"></div>
<div class="hl" style="left:250px;top:659px;width:1368px"></div>
<div class="hl" style="left:250px;top:709px;width:1368px"></div>
<div class="gbar" style="top:260px"></div>
<div class="gbar" style="top:410px"></div>
<div class="gbar" style="top:460px"></div>
<div class="gbar" style="top:510px"></div>
<div class="gbar" style="top:610px"></div>
<div class="t b" style="left:254px;top:178px">Name</div>
<div class="t b" style="left:497px;top:178px">Value</div>
<div class="t b" style="left:647px;top:178px">Preview - en</div>
<div class="t b" style="left:797px;top:178px">Creation Date - en</div>
<div class="t b" style="left:947px;top:178px">Production Statu...</div>
<div class="t b" style="left:1097px;top:178px">Billing Brand</div>
<div class="t b" style="left:1247px;top:178px">Additional - en</div>
<svg class="a" style="left:289.6px;top:181.5px" width="6.6" height="4.6" viewBox="0 0 6.6 4.6"><polyline points="0.6,4 3.3,1.1 6,4" fill="none" stroke="#fff" stroke-width="1.5"/></svg>
<div class="t" style="left:253.4px;top:227px">as_ref_table_01 (en)</div>
<div class="t" style="left:254px;top:278px">62460-H-00-3P.tif</div>
<div class="t" style="left:797.5px;top:278px">Friday 2021/08/06</div>
<div class="t" style="left:1247.5px;top:278px">Size: 33,014,064</div>
<div class="t" style="left:254px;top:328px">small-blue-car-02.jpg</div>
<div class="t" style="left:797.5px;top:328px">Tuesday 2021/02/23</div>
<div class="t" style="left:1247.5px;top:328px">Size: 13,162</div>
<div class="t" style="left:253.4px;top:427px">as_ref_table_03</div>
<div class="t" style="left:254px;top:478px">57E11_9990_00X_D_003.tif</div>
<div class="t" style="left:797.5px;top:478px">Friday 2021/08/06</div>
<div class="t" style="left:1247.5px;top:478px">Size: 13,996,820</div>
<div class="t" style="left:254px;top:528px">small-blue-car-01.jpg</div>
<div class="t" style="left:797.5px;top:528px">Tuesday 2021/02/23</div>
<div class="t" style="left:1247.5px;top:528px">Size: 83,290</div>
<div class="t" style="left:253.4px;top:577px">as_ref_table_04</div>
<div class="t" style="left:254px;top:628px">338137_IP_AFV01_201909271058...</div>
<div class="t" style="left:797.5px;top:628px">Friday 2021/08/06</div>
<div class="t" style="left:1247.5px;top:628px">Size: 11,586,165</div>
<svg class="a" style="left:367.5px;top:226.5px" width="17" height="17"><use href="#link"/></svg>
<svg class="a" style="left:387.6px;top:228px" width="13" height="13"><use href="#info"/></svg>
<svg class="a" style="left:681.8px;top:276.5px" width="17" height="17"><use href="#link"/></svg>
<svg class="a" style="left:706.3px;top:326.5px" width="17" height="17"><use href="#link"/></svg>
<svg class="a" style="left:343px;top:426.5px" width="17" height="17"><use href="#link"/></svg>
<svg class="a" style="left:342px;top:425.5px" width="19" height="19" viewBox="0 0 19 19"><path d="M2,2.2 L17,16.8" stroke="#404040" stroke-width="4"/><path d="M1.6,1.8 L17.6,17.4" stroke="#fff" stroke-width="3"/></svg>
<svg class="a" style="left:363.3px;top:428.2px;color:#f60" width="12.6" height="12.6"><use href="#info2"/></svg>
<svg class="a" style="left:343px;top:576.5px" width="17" height="17"><use href="#link"/></svg>
<svg class="a" style="left:363.3px;top:578.2px;color:#e2003b" width="12.6" height="12.6"><use href="#info2"/></svg>
<svg class="a" style="left:685.3px;top:626px" width="17" height="17"><use href="#link"/></svg>
<svg class="a" style="left:647px;top:365px" width="70" height="40" viewBox="0 0 70 40"><rect x="0.5" y="0.5" width="69" height="39" fill="none" stroke="#fff" stroke-width="1" stroke-dasharray="3 2"/><path d="M25.4,17.2h6.9v-6.9a1.2,1.2 0 0 1 1.2,-1.2h3.2a1.2,1.2 0 0 1 1.2,1.2v6.9h6.9a1.2,1.2 0 0 1 1.2,1.2v3.2a1.2,1.2 0 0 1 -1.2,1.2h-6.9v6.9a1.2,1.2 0 0 1 -1.2,1.2h-3.2a1.2,1.2 0 0 1 -1.2,-1.2v-6.9h-6.9a1.2,1.2 0 0 1 -1.2,-1.2v-3.2a1.2,1.2 0 0 1 1.2,-1.2z" fill="#fff"/></svg>
<svg class="a" style="left:647px;top:665px" width="70" height="40" viewBox="0 0 70 40"><rect x="0.5" y="0.5" width="69" height="39" fill="none" stroke="#fff" stroke-width="1" stroke-dasharray="3 2"/><path d="M25.4,17.2h6.9v-6.9a1.2,1.2 0 0 1 1.2,-1.2h3.2a1.2,1.2 0 0 1 1.2,1.2v6.9h6.9a1.2,1.2 0 0 1 1.2,1.2v3.2a1.2,1.2 0 0 1 -1.2,1.2h-6.9v6.9a1.2,1.2 0 0 1 -1.2,1.2h-3.2a1.2,1.2 0 0 1 -1.2,-1.2v-6.9h-6.9a1.2,1.2 0 0 1 -1.2,-1.2v-3.2a1.2,1.2 0 0 1 1.2,-1.2z" fill="#fff"/></svg>
<svg class="a" style="left:724.8px;top:378px" width="13" height="13"><use href="#info"/></svg>
<svg class="a" style="left:724.8px;top:678px" width="13" height="13"><use href="#info"/></svg>
<div class="a" style="left:250px;top:919px;width:1368px;height:17px;background:#f1f1f1"></div>
<div class="a" style="left:337px;top:921px;width:1264px;height:13px;background:#c1c1c1"></div>
<svg class="a" style="left:255.5px;top:924px" width="5" height="7" viewBox="0 0 5 7"><path d="M4.6,0v7l-4.4,-3.5z" fill="#505050"/></svg>
<svg class="a" style="left:1608px;top:924px" width="5" height="7" viewBox="0 0 5 7"><path d="M0.4,0v7l4.4,-3.5z" fill="#a3a3a3"/></svg>
<div class="hl" style="left:250px;top:936px;width:1368px;background:#999"></div>
</div>

<!-- ===== right panel ===== -->
<div id="right">
<div class="card" id="card1" style="top:168px"></div>
<div class="meta" style="top:201px">Creation Date - en</div>
<div class="meta" style="top:219px">Tuesday 2021/0...</div>
<div class="meta" style="top:245px">Modification date</div>
<div class="meta" style="top:263px">Tuesday 2021/0...</div>
<div class="t" style="left:1635px;top:342px">small-blue-car-01</div>
<div class="card" id="card2" style="top:389px"></div>
<div class="meta" style="top:422px">Creation Date - en</div>
<div class="meta" style="top:440px">Friday 2021/08/06</div>
<div class="meta" style="top:466px">Modification date</div>
<div class="meta" style="top:484px">Friday 2021/08/06</div>
<div class="t" style="left:1635px;top:563px">62460-H-00-3P</div>
<div class="card" id="card3" style="top:610px"></div>
<div class="meta" style="top:643px">Creation Date - en</div>
<div class="meta" style="top:661px">Friday 2021/08/06</div>
<div class="meta" style="top:687px">Modification date</div>
<div class="meta" style="top:705px">Friday 2021/08/06</div>
<div class="t" style="left:1635px;top:784px">338137_IP_AFV01_20190927105800022_ADP...</div>
<div class="card" id="card4" style="top:831px"></div>
<div class="meta" style="top:864px">Creation Date - en</div>
<div class="meta" style="top:882px">Tuesday 2021/0...</div>
<div class="meta" style="top:908px">Modification date</div>
<div class="meta" style="top:926px">Tuesday 2021/0...</div>
<div class="t" style="left:1654px;top:176px;text-shadow:-1px 0 #000,1px 0 #000,0 -1px #000,0 1px #000,-1px -1px #000,1px 1px #000,1px -1px #000,-1px 1px #000">as_ref_table_03</div>
<svg class="a" style="left:1775.2px;top:172.8px" width="13.4" height="13.4"><use href="#pencil"/></svg>
<div class="a" style="left:1903px;top:160px;width:17px;height:777px;background:#f1f1f1"></div>
<div class="a" style="left:1905px;top:177px;width:13px;height:433px;background:#c1c1c1"></div>
<svg class="a" style="left:1908px;top:167px" width="7" height="4" viewBox="0 0 7 4"><path d="M0,4h7l-3.5,-3.8z" fill="#a3a3a3"/></svg>
<svg class="a" style="left:1908px;top:925px" width="7" height="4" viewBox="0 0 7 4"><path d="M0,0h7l-3.5,3.8z" fill="#505050"/></svg>
</div>

<!-- ===== images ===== -->
<div id="images">
<svg class="a" style="left:1636px;top:201px" width="156" height="94"><use href="#imgA"/></svg>
<svg class="a" style="left:647px;top:515px" width="66" height="40"><use href="#imgA"/></svg>
<svg class="a" style="left:1662px;top:391px" width="104" height="156"><use href="#imgB"/></svg>
<svg class="a" style="left:647px;top:265px" width="27" height="40"><use href="#imgB"/></svg>
<svg class="a" style="left:1655px;top:612px" width="117" height="156"><use href="#imgC"/></svg>
<svg class="a" style="left:647px;top:615px;filter:brightness(1.08) contrast(0.9)" width="30" height="40"><use href="#imgC"/></svg>
<svg class="a" style="left:1636px;top:847px" width="156" height="127"><use href="#imgD"/></svg>
<svg class="a" style="left:647px;top:315px" width="52" height="40"><use href="#imgE"/></svg>
<svg class="a" style="left:647px;top:465px" width="31" height="40"><use href="#imgF"/></svg>
<!-- drag ghost -->
<svg class="a" style="left:671px;top:641px;opacity:0.56;filter:saturate(1.35)" width="157" height="128"><use href="#imgD"/></svg>
</div>
<!-- ===== overlays ===== -->
<div id="overlays">
<svg class="a" style="left:268px;top:55px" width="11" height="10" viewBox="0 0 11 10"><path d="M5.3,1.100L1.200,5L5.300,8.900M9.800,1.100L5.700,5L9.800,8.900" fill="none" stroke="#22a0f0" stroke-width="1.400"/></svg>
<svg class="a" style="left:1591px;top:55px" width="11" height="10" viewBox="0 0 11 10"><path d="M1.200,1.100L5.300,5L1.200,8.900M5.700,1.100L9.800,5L5.700,8.900" fill="none" stroke="#22a0f0" stroke-width="1.400"/></svg>
<!-- red arrow -->
<svg class="a" style="left:930px;top:740px" width="690" height="150" viewBox="930 740 690 150">
<defs><filter id="arSh" x="-5%" y="-30%" width="110%" height="170%"><feGaussianBlur stdDeviation="2.200"/></filter></defs>
<g transform="translate(2.500,4)" filter="url(#arSh)" opacity="0.550"><path d="M1591,867.800L958,764.300" stroke="#000" stroke-width="5.400" stroke-linecap="round"/><path d="M946,762.400L961.800,757L959,762.500L958,766.500L959.600,771.700Z" fill="#000"/></g>
<path d="M1591,867.800L958,764.300" stroke="#fd4040" stroke-width="5.400" stroke-linecap="round"/>
<path d="M946,762.400L961.800,757L959.400,762L958.200,767L959.600,771.700Z" fill="#fd4040"/>
</svg>
<div class="hl" style="left:1634px;top:936px;width:269px;background:#404040"></div>
<!-- cursor -->
<svg class="a" style="left:772px;top:680px" width="24" height="34" viewBox="0 0 24 34">
<path d="M1.500,1.200V17.200L5.200,13.700L8,20.200L10.600,19.100L7.900,12.700H12.900Z" fill="#000" stroke="#fff" stroke-width="1.100" stroke-linejoin="miter"/>
<rect x="6.500" y="18.500" width="9" height="7" fill="none" stroke="#fff" stroke-width="1" stroke-dasharray="1 1"/>
<rect x="6.500" y="18.500" width="9" height="7" fill="none" stroke="#000" stroke-width="1" stroke-dasharray="1 1" stroke-dashoffset="1"/>
<rect x="11.500" y="21.500" width="10" height="10" fill="#fff" stroke="#000" stroke-width="0.900"/>
<path d="M13.600,26.500h5.800M16.500,23.600v5.800" stroke="#000" stroke-width="1.100"/>
</svg>
</div>
</body>
</html>
